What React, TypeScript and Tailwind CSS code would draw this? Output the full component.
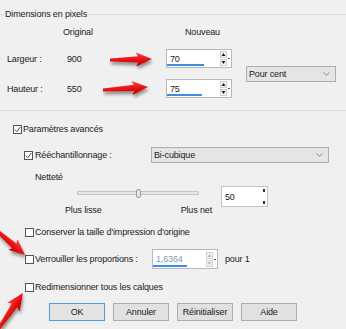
import React from "react"

function Box({ checked }: { checked?: boolean }) {
  return (
    <span className="relative inline-block h-[9px] w-[9px] shrink-0 border border-[#555] bg-white">
      {checked && (
        <svg className="absolute left-0 top-0" width="7" height="7" viewBox="0 0 7 7">
          <polyline points="0.8,3.6 2.8,5.6 6.4,1" fill="none" stroke="#333" strokeWidth="0.9" />
        </svg>
      )}
    </span>
  )
}

function Spin({ light }: { light?: boolean }) {
  const c = light ? "#b8b8b8" : "#1e1e1e"
  return (
    <div className="flex items-center gap-[1px] pr-[1px]">
      <div className="flex flex-col gap-[1px]">
        <svg width="7" height="7" viewBox="0 0 7 7">
          <rect x="0.5" y="0.5" width="6" height="6" fill="#f6f6f6" stroke="#cfcfcf" />
          <path d="M1.5 5 L3.5 2 L5.5 5Z" fill={c} />
        </svg>
        <svg width="7" height="7" viewBox="0 0 7 7">
          <rect x="0.5" y="0.5" width="6" height="6" fill="#f6f6f6" stroke="#cfcfcf" />
          <path d="M1.5 2 L3.5 5 L5.5 2Z" fill={c} />
        </svg>
      </div>
      <span className="h-[1px] w-[2px] bg-[#555]" />
    </div>
  )
}

function Chevron() {
  return (
    <svg width="7" height="4" viewBox="0 0 7 4">
      <polyline points="0.5,0.5 3.5,3.3 6.5,0.5" fill="none" stroke="#8a8a8a" strokeWidth="1" />
    </svg>
  )
}

const arrows = [
  { x1: 110, y1: 60, x2: 152, y2: 59, head: 14, hw: 7 },
  { x1: 103, y1: 90, x2: 148, y2: 87, head: 14, hw: 7 },
  { x1: -4, y1: 230, x2: 25, y2: 255, head: 14, hw: 7 },
  { x1: -3, y1: 331, x2: 23, y2: 293, head: 15, hw: 7.5 },
]

function shape(L: number, head: number, hw: number) {
  const b = L - head
  return `0,-1.5 ${b},-3.2 ${b - 2},-${hw} ${L},0 ${b - 2},${hw} ${b},3.2 0,1.5`
}

function Arrows() {
  return (
    <svg className="pointer-events-none absolute left-0 top-0" width="346" height="329">
      <defs>
        <filter id="sh" x="-20%" y="-50%" width="140%" height="200%">
          <feGaussianBlur stdDeviation="1.5" />
        </filter>
        <linearGradient id="red" x1="0" y1="0" x2="0" y2="1">
          <stop offset="0" stopColor="#ff4040" />
          <stop offset="0.55" stopColor="#e80e0e" />
          <stop offset="1" stopColor="#b30000" />
        </linearGradient>
      </defs>
      {arrows.map((a, i) => {
        const dx = a.x2 - a.x1
        const dy = a.y2 - a.y1
        const L = Math.sqrt(dx * dx + dy * dy)
        const deg = (Math.atan2(dy, dx) * 180) / Math.PI
        const pts = shape(L, a.head, a.hw)
        return (
          <g key={i}>
            <g transform={`translate(${a.x1 + 1} ${a.y1 + 3}) rotate(${deg})`}>
              <polygon points={pts} fill="rgba(0,0,0,0.4)" filter="url(#sh)" />
            </g>
            <g transform={`translate(${a.x1} ${a.y1}) rotate(${deg})`}>
              <polygon points={pts} fill="url(#red)" />
            </g>
          </g>
        )
      })}
    </svg>
  )
}

function NumInput({ value, bar, light }: { value: string; bar: number; light?: boolean }) {
  return (
    <div className="relative flex h-full w-full items-center border border-[#b9b9b9] bg-white">
      <span className={`flex-1 pl-[3px] ${light ? "text-[#7f98b6]" : "text-[#1a1a1a]"}`}>{value}</span>
      <Spin light={light} />
      <span className="absolute bottom-[1px] left-0 h-[2px] bg-[#3b8ee0]" style={{ width: bar }} />
    </div>
  )
}

export default function App() {
  return (
    <div className="relative h-[329px] w-[346px] overflow-hidden bg-[#f0f0f0] font-['Liberation_Sans',Arial,sans-serif] text-[9px] leading-[12px] tracking-[-0.15px] text-[#1a1a1a]">
      <div className="relative mt-[14px] h-[97px] border-y border-[#dadada]">
        <span className="absolute -top-[7px] left-[4px] bg-[#f0f0f0] px-[1px]">Dimensions en pixels</span>
        <div className="grid grid-cols-[56px_103px_66px_14px_90px] grid-rows-[12px_19px_19px] gap-y-[11px] pl-[7px] pt-[11px]">
          <span />
          <span>Original</span>
          <span className="pl-[19px]">Nouveau</span>
          <span />
          <span />

          <span className="self-center">Largeur :</span>
          <span className="self-center pl-[4px]">900</span>
          <NumInput value="70" bar={37} />
          <span />
          <div className="row-span-2 flex h-[16px] items-center self-center border border-[#adadad] bg-[#e5e5e5] pl-[2px] pr-[5px]">
            <span className="flex-1">Pour cent</span>
            <Chevron />
          </div>

          <span className="self-center">Hauteur :</span>
          <span className="self-center pl-[4px]">550</span>
          <NumInput value="75" bar={35} />
          <span />
        </div>
      </div>

      <div className="mt-[10px] flex h-[16px] items-center pl-[13px]">
        <Box checked />
        <span className="ml-[1px]">Paramètres avancés</span>
      </div>

      <div className="mt-[10px] flex h-[16px] items-center pl-[24px]">
        <Box checked />
        <span className="ml-[2px] w-[116px]">Rééchantillonnage :</span>
        <div className="flex h-full w-[178px] items-center border border-[#adadad] bg-[#e5e5e5] pl-[2px] pr-[5px]">
          <span className="flex-1">Bi-cubique</span>
          <Chevron />
        </div>
      </div>

      <div className="mt-[8px] flex h-[12px] items-center pl-[35px]">
        <span>Netteté</span>
      </div>

      <div className="mt-[3px] flex items-start pl-[65px]">
        <div className="flex w-[150px] flex-col">
          <div className="relative ml-[12px] flex h-[14px] w-[122px] items-center">
            <div className="h-[4px] w-full rounded-[1px] border border-[#c4c4c4] bg-[#e6e6e6]" />
            <div className="absolute left-[59px] top-[3px] h-[9px] w-[5px] rounded-[2px] border border-[#9a9a9a] bg-[#e8e8e8]" />
          </div>
          <div className="mt-[5px] flex h-[10px] items-center pr-[3px]">
            <span>Plus lisse</span>
            <span className="ml-auto">Plus net</span>
          </div>
        </div>
        <div className="ml-[6px] flex h-[21px] w-[47px] items-center border border-[#c4c4c4] bg-white">
          <span className="flex-1 pl-[3px]">50</span>
          <div className="flex h-full flex-col justify-between py-[2px] pr-[2px]">
            <span className="h-[3px] w-[2px] bg-[#333]" />
            <span className="h-[3px] w-[2px] bg-[#333]" />
          </div>
        </div>
      </div>

      <div className="mt-[11px] flex h-[12px] items-center pl-[25px]">
        <Box />
        <span className="ml-[1px]">Conserver la taille d'impression d'origine</span>
      </div>

      <div className="mt-[11px] flex h-[20px] items-center pl-[25px]">
        <Box />
        <span className="ml-[1px] w-[117px]">Verrouiller les proportions :</span>
        <div className="h-[20px] w-[66px]">
          <NumInput value="1,6364" bar={34} light />
        </div>
        <span className="ml-[7px]">pour 1</span>
      </div>

      <div className="mt-[12px] flex h-[12px] items-center pl-[25px]">
        <Box />
        <span className="ml-[1px]">Redimensionner tous les calques</span>
      </div>

      <div className="mt-[10px] flex h-[18px] gap-[8px] pl-[49px]">
        <button className="flex w-[56px] items-center justify-center border border-[#4f9be3] bg-[#e3e3e3]">OK</button>
        <button className="flex w-[56px] items-center justify-center border border-[#adadad] bg-[#e1e1e1]">Annuler</button>
        <button className="flex w-[56px] items-center justify-center border border-[#adadad] bg-[#e1e1e1]">Réinitialiser</button>
        <button className="flex w-[56px] items-center justify-center border border-[#adadad] bg-[#e1e1e1]">Aide</button>
      </div>

      <Arrows />
    </div>
  )
}
